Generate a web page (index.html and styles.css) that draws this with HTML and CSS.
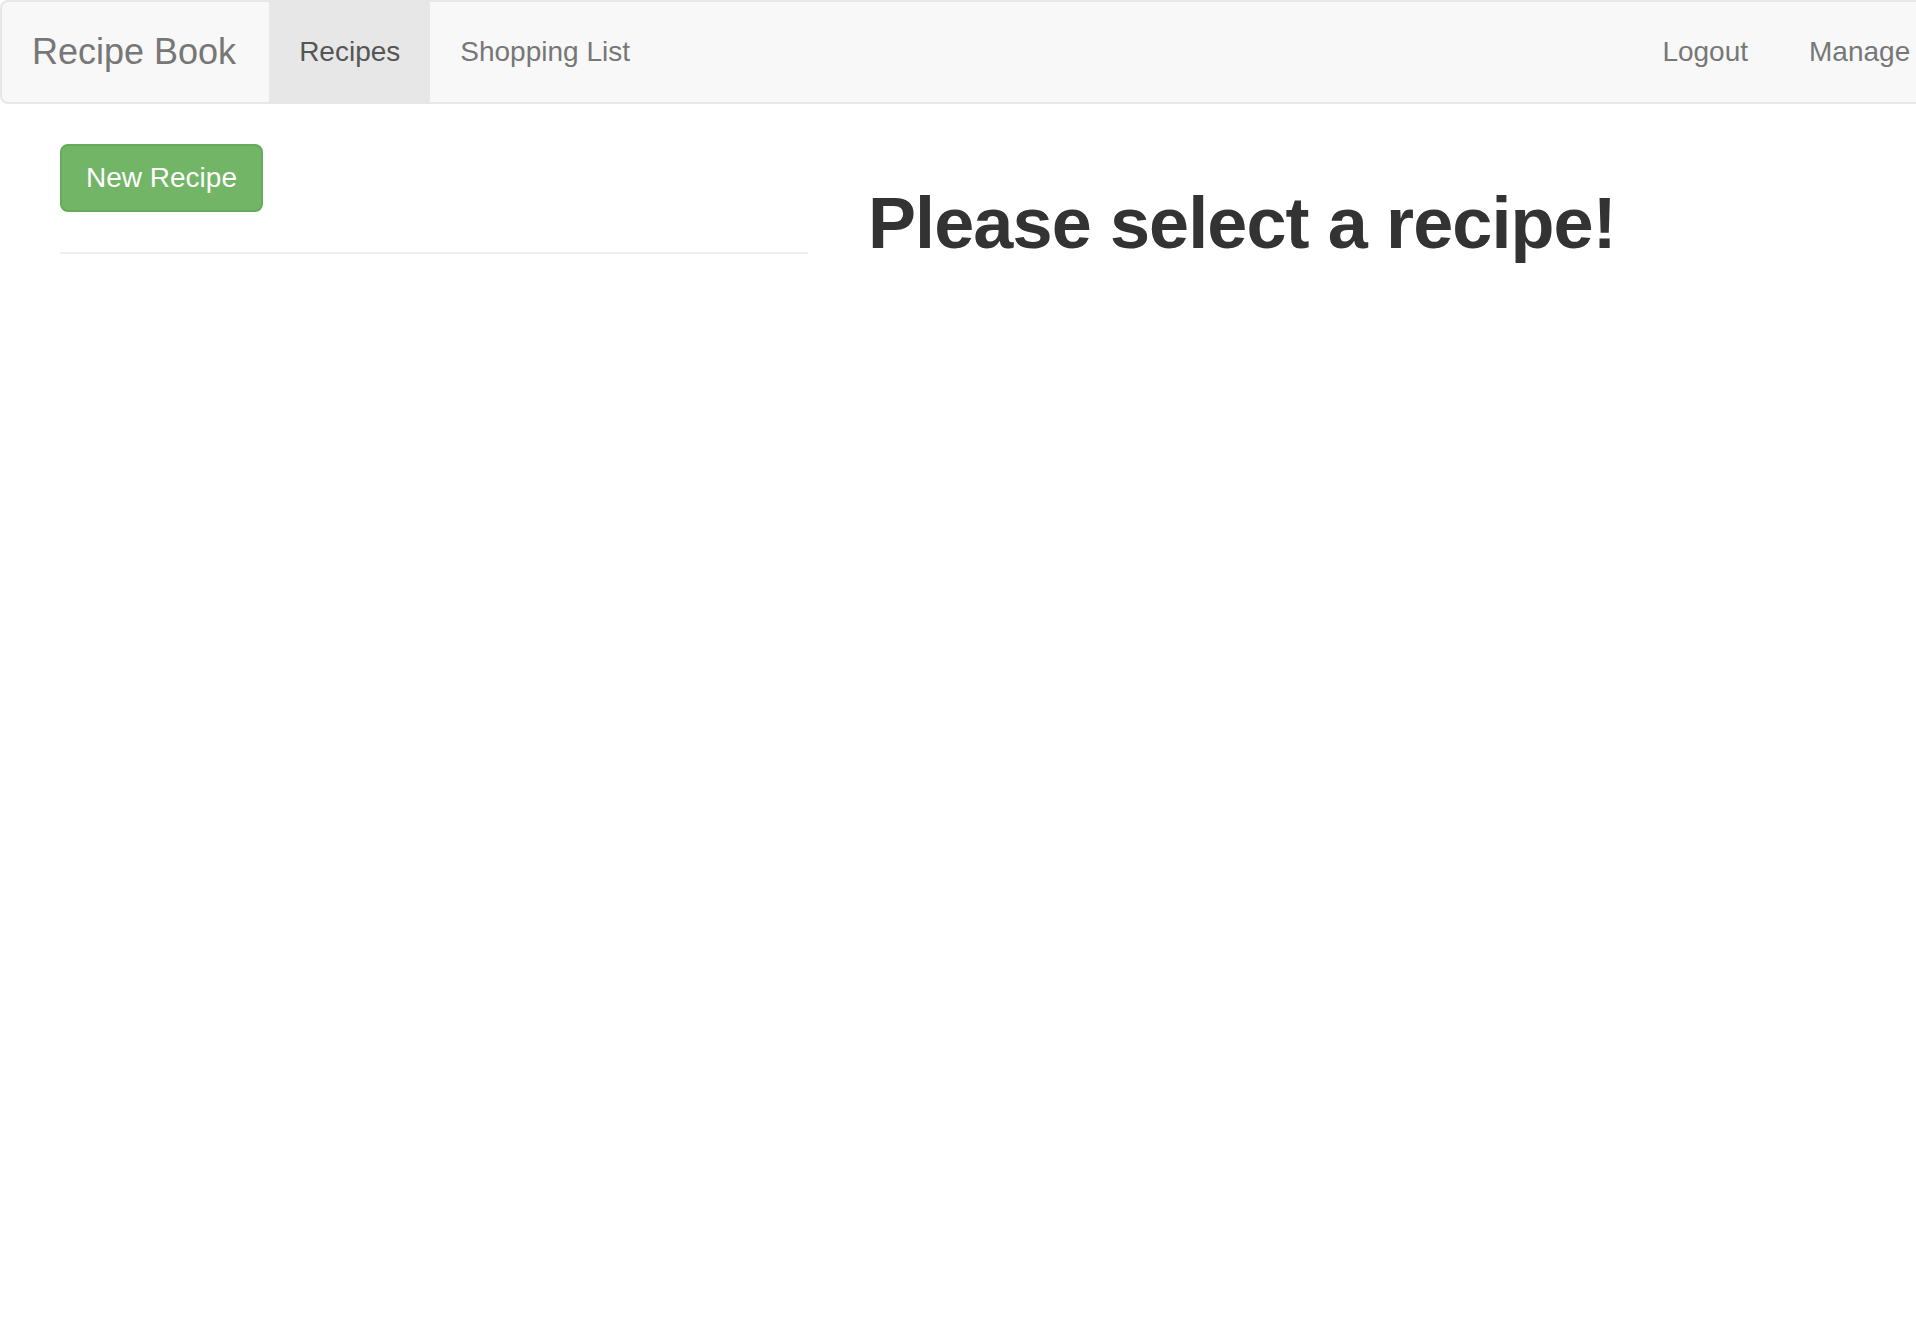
FILE: index.html
```html
<!DOCTYPE html>
<html lang="en">
<head>
<meta charset="utf-8">
<title>Recipe Book</title>
<link rel="stylesheet" href="styles.css">
</head>
<body>
<nav class="navbar">
  <div class="navbar-inner">
    <a class="brand" href="#">Recipe Book</a>
    <ul class="nav">
      <li class="active"><a href="#">Recipes</a></li>
      <li><a href="#">Shopping List</a></li>
    </ul>
    <ul class="nav nav-right">
      <li class="logout"><a href="#">Logout</a></li>
      <li><a href="#">Manage <span class="caret"></span></a></li>
    </ul>
  </div>
</nav>
<main class="container">
  <div class="row">
    <div class="col-left">
      <div class="btn-row"><button class="btn-success" type="button">New Recipe</button></div>
      <hr class="divider">
    </div>
    <div class="col-right">
      <h1 class="title">Please select a recipe!</h1>
    </div>
  </div>
</main>
</body>
</html>
```

FILE: styles.css
```css
html, body {
  margin: 0;
  padding: 0;
  overflow-x: hidden;
}
body {
  font-family: "Liberation Sans", Arial, Helvetica, sans-serif;
  font-size: 28px;
  line-height: 40px;
  color: #333;
  background: #fff;
}
.navbar {
  margin: 0 -54px 40px 0;
  min-height: 100px;
  background: #f8f8f8;
  border: 2px solid #e7e7e7;
  border-radius: 8px;
}
.navbar-inner {
  display: flex;
  align-items: stretch;
}
.brand {
  display: block;
  padding: 30px 33px 30px 30px;
  height: 40px;
  font-size: 36px;
  line-height: 40px;
  color: #777;
  text-decoration: none;
}
.nav {
  display: flex;
  margin: 0;
  padding: 0;
  list-style: none;
}
.nav li a {
  display: block;
  padding: 30px 30px;
  line-height: 40px;
  color: #777;
  text-decoration: none;
}
.nav li.active a {
  background: #e7e7e7;
  color: #555;
}
.nav li.logout a {
  padding-right: 31px;
}
.nav-right {
  margin-left: auto;
}
.caret {
  display: inline-block;
  width: 0;
  height: 0;
  margin-left: 4px;
  vertical-align: middle;
  border-top: 8px solid #777;
  border-left: 8px solid transparent;
  border-right: 8px solid transparent;
}
.container {
  padding: 0 30px;
}
.row {
  display: flex;
}
.col-left {
  width: 748px;
  padding: 0 30px;
  flex: none;
}
.col-right {
  flex: 1;
  padding: 0 30px;
}
.btn-row {
  display: flex;
}
.btn-success {
  font-family: inherit;
  font-size: 28px;
  line-height: 40px;
  padding: 12px 24px;
  color: #fff;
  background: #72b567;
  border: 2px solid #66ab5b;
  border-radius: 8px;
  cursor: pointer;
}
.divider {
  margin: 40px 0;
  border: 0;
  border-top: 2px solid #eee;
  height: 0;
}
.title {
  margin: 40px 0 20px;
  font-size: 72px;
  line-height: 1.1;
  font-weight: bold;
  letter-spacing: -0.9px;
  color: #333;
}
```
